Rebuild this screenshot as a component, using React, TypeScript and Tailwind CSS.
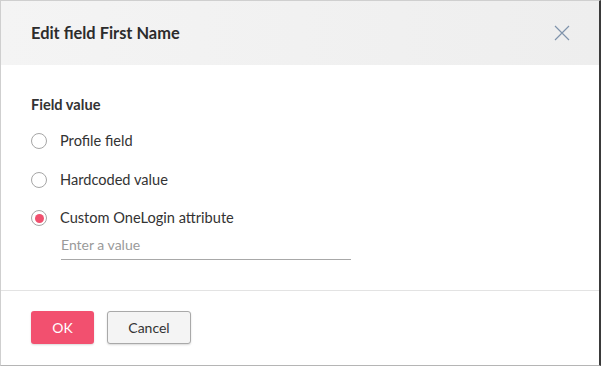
import React from 'react';

function Radio({ label, checked }: { label: string; checked?: boolean }) {
  return (
    <label className="flex h-[22px] items-center gap-[13px]">
      <span className="flex h-[16px] w-[16px] items-center justify-center rounded-full border border-[#a6a6a6] bg-white">
        {checked ? <span className="h-[9px] w-[9px] rounded-full bg-[#f0506e]" /> : null}
      </span>
      <span className="text-[14.6px] text-[#333]">{label}</span>
    </label>
  );
}

export default function App() {
  return (
    <div
      className="flex h-[366px] w-[601px] flex-col overflow-hidden border-t border-l border-b border-r-2 border-t-[#cfcfcf] border-l-[#cfcfcf] border-b-[#b5b5b5] border-r-[#3a3a3a] bg-white"
      style={{ fontFamily: 'Lato, "Open Sans", sans-serif' }}
    >
      <div className="flex h-[64px] shrink-0 items-center justify-between bg-gradient-to-r from-[#f4f4f4] to-[#eeeeee] pl-[30px] pr-[28px]">
        <h1 className="text-[16.4px] font-bold text-[#2c2c2c]">Edit field First Name</h1>
        <button type="button" className="flex h-[18px] w-[18px] items-center justify-center">
          <svg width="16" height="16" viewBox="0 0 16 16" fill="none" stroke="#7f93ab" strokeWidth="1.2">
            <path d="M1 1 L15 15 M15 1 L1 15" />
          </svg>
        </button>
      </div>
      <div className="flex flex-1 flex-col border-b border-[#e3e3e3] pl-[30px] pt-[30px]">
        <p className="text-[14.6px] font-bold leading-[20px] text-[#333]">Field value</p>
        <div className="mt-[15px] flex flex-col gap-[16.5px]">
          <Radio label="Profile field" />
          <Radio label="Hardcoded value" />
          <Radio label="Custom OneLogin attribute" checked />
        </div>
        <div className="ml-[30px] mt-[2px] w-[290px] border-b border-[#a8a8a8] pb-[3px] pt-[1px]">
          <span className="text-[14px] leading-[20px] text-[#9a9a9a]">Enter a value</span>
        </div>
      </div>
      <div className="flex h-[74px] shrink-0 items-center gap-[13px] pl-[30px] pb-[2px]">
        <button
          type="button"
          className="h-[33px] w-[63px] rounded-[3px] bg-[#f2506f] text-[14px] text-white shadow-[0_1px_2px_rgba(0,0,0,0.15)]"
        >
          OK
        </button>
        <button
          type="button"
          className="h-[33px] w-[84px] rounded-[3px] border border-[#a9a9a9] bg-[#f4f4f4] text-[14px] text-[#333] shadow-[0_1px_2px_rgba(0,0,0,0.15)]"
        >
          Cancel
        </button>
      </div>
    </div>
  );
}
